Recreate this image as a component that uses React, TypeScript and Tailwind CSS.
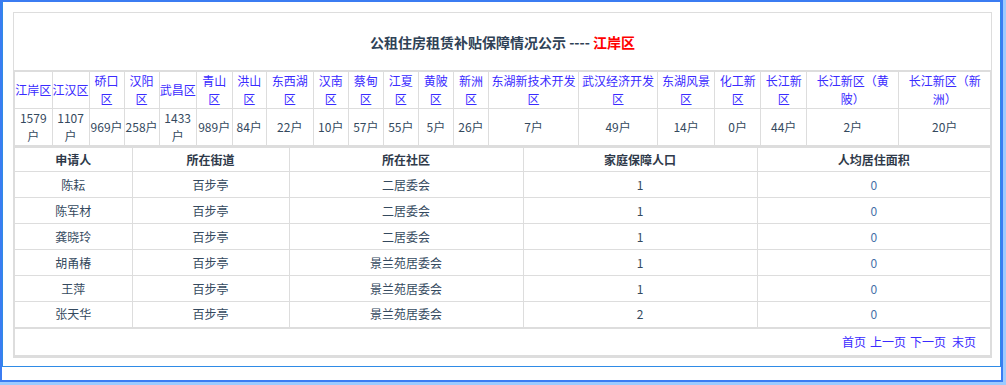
import React from 'react';

const districts = [
  { name: '江岸区', count: '1579户', w: 38 },
  { name: '江汉区', count: '1107户', w: 37 },
  { name: '硚口区', count: '969户', w: 35 },
  { name: '汉阳区', count: '258户', w: 35 },
  { name: '武昌区', count: '1433户', w: 37 },
  { name: '青山区', count: '989户', w: 36 },
  { name: '洪山区', count: '84户', w: 34 },
  { name: '东西湖区', count: '22户', w: 47 },
  { name: '汉南区', count: '10户', w: 35 },
  { name: '蔡甸区', count: '57户', w: 35 },
  { name: '江夏区', count: '55户', w: 35 },
  { name: '黄陂区', count: '5户', w: 35 },
  { name: '新洲区', count: '26户', w: 35 },
  { name: '东湖新技术开发区', count: '7户', w: 90 },
  { name: '武汉经济开发区', count: '49户', w: 79 },
  { name: '东湖风景区', count: '14户', w: 57 },
  { name: '化工新区', count: '0户', w: 46 },
  { name: '长江新区', count: '44户', w: 46 },
  { name: '长江新区（黄陂）', count: '2户', w: 92 },
  { name: '长江新区（新洲）', count: '20户', w: 92 },
];

const rows = [
  { name: '陈耘', street: '百步亭', community: '二居委会', people: '1', area: '0' },
  { name: '陈军材', street: '百步亭', community: '二居委会', people: '1', area: '0' },
  { name: '龚晓玲', street: '百步亭', community: '二居委会', people: '1', area: '0' },
  { name: '胡甬椿', street: '百步亭', community: '景兰苑居委会', people: '1', area: '0' },
  { name: '王萍', street: '百步亭', community: '景兰苑居委会', people: '1', area: '0' },
  { name: '张天华', street: '百步亭', community: '景兰苑居委会', people: '2', area: '0' },
];

const headers = [
  { label: '申请人', w: 118 },
  { label: '所在街道', w: 157 },
  { label: '所在社区', w: 234 },
  { label: '家庭保障人口', w: 234 },
  { label: '人均居住面积', w: 234 },
];

export default function App() {
  return (
    <div
      className="w-full h-[385px] bg-[#9ccbff] text-[12px] text-[#34495e] [text-spacing-trim:space-all]"
      style={{ fontFamily: '"Noto Sans CJK SC", "Noto Sans", sans-serif' }}
    >
      <div className="w-[1003px] h-[382px] bg-white border-2 border-[#3b7cf2]">
        <div className="h-[365px] border-x border-b border-[#2f8be6] pt-[10px] pl-[10px]">
          <div className="w-[979px] border border-[#dddddd]">
            {/* Title */}
            <div className="h-[57px] flex items-center justify-center pt-[2px]">
              <h1 className="text-[14px] font-bold text-[#2f4256]">
                公租住房租赁补贴保障情况公示 ---- <span className="text-[#ff0000]">江岸区</span>
              </h1>
            </div>

            {/* Districts */}
            <table className="w-[979px] -ml-px table-fixed border-collapse border-2 border-[#dddddd] leading-[18px] text-center">
              <colgroup>
                {districts.map((d) => (
                  <col key={d.name} style={{ width: d.w }} />
                ))}
              </colgroup>
              <tbody>
                <tr className="h-[35px]">
                  {districts.map((d) => (
                    <td key={d.name} className="border border-[#dddddd] p-0 text-[#3a2bff]">
                      <a href="#" className="text-[#3a2bff]">{d.name}</a>
                    </td>
                  ))}
                </tr>
                <tr className="h-[35px]">
                  {districts.map((d) => (
                    <td key={d.name} className="border border-[#dddddd] p-0">
                      {d.count}
                    </td>
                  ))}
                </tr>
              </tbody>
            </table>

            {/* Applicants */}
            <table className="w-[979px] -ml-px table-fixed border-collapse border-2 border-t-0 border-[#dddddd] text-center">
              <colgroup>
                {headers.map((h) => (
                  <col key={h.label} style={{ width: h.w }} />
                ))}
              </colgroup>
              <thead>
                <tr className="h-[24px]">
                  {headers.map((h) => (
                    <th key={h.label} className="border border-[#dddddd] p-0 font-bold text-[#2f3a4a]">
                      {h.label}
                    </th>
                  ))}
                </tr>
              </thead>
              <tbody>
                {rows.map((r) => (
                  <tr key={r.name} className="h-[26px]">
                    <td className="border border-[#dddddd] p-0">{r.name}</td>
                    <td className="border border-[#dddddd] p-0">{r.street}</td>
                    <td className="border border-[#dddddd] p-0">{r.community}</td>
                    <td className="border border-[#dddddd] p-0">{r.people}</td>
                    <td className="border border-[#dddddd] p-0 text-[#4670a8]">{r.area}</td>
                  </tr>
                ))}
              </tbody>
            </table>

            {/* Pager */}
            <div className="-ml-px w-[979px] h-[28px] border-2 border-t-0 border-[#dddddd] flex items-center justify-end pr-[14px] gap-[4px] text-[#3a2bff]">
              <a href="#">首页</a>
              <a href="#">上一页</a>
              <a href="#">下一页</a>
              <a href="#" className="ml-[2px]">末页</a>
            </div>
          </div>
        </div>
      </div>
    </div>
  );
}
